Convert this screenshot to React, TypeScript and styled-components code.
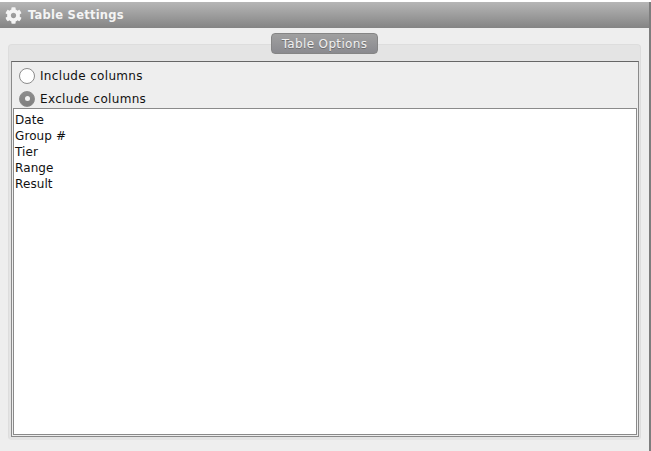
import * as React from "react";
import styled, { createGlobalStyle } from "styled-components";
import { FaCog } from "react-icons/fa";

const GlobalStyle = createGlobalStyle`
    html, body {
        margin: 0;
        padding: 0;
        background: #fff;
    }
    body {
        font-family: "DejaVu Sans", sans-serif;
    }
`;

const Frame = styled.div`
    width: 651px;
    height: 451px;
    padding-top: 2px;
    box-sizing: border-box;
    overflow: hidden;
`;

const Window = styled.div`
    width: 651px;
    height: 449px;
    box-sizing: border-box;
    border-right: 2px solid #7d7d7d;
    background: #eeeeee;
    display: flex;
    flex-direction: column;
`;

const TitleBar = styled.div`
    height: 26px;
    flex: none;
    display: flex;
    align-items: center;
    gap: 6px;
    padding-left: 5px;
    background: linear-gradient(#b6b6b6, #848484);
`;

const TitleText = styled.span`
    color: #f4f4f4;
    font-size: 11.5px;
    font-weight: bold;
    letter-spacing: 0.25px;
`;

const Body = styled.div`
    flex: 1;
    padding: 16px 8px 11px 8px;
    display: flex;
    min-height: 0;
`;

const Group = styled.div`
    position: relative;
    flex: 1;
    background: #e4e4e4;
    border: 1px solid #dddddd;
    border-bottom-color: #e4e4e4;
    border-radius: 4px;
    padding: 16px 1px 2px 2px;
    display: flex;
`;

const GroupTab = styled.div`
    position: absolute;
    top: -12px;
    left: 262px;
    width: 107px;
    height: 21px;
    box-sizing: border-box;
    border-radius: 4px;
    border: 1px solid #858585;
    background: linear-gradient(#a0a0a0, #8a8a8f);
    color: #f0f0f0;
    font-size: 12px;
    letter-spacing: 0.35px;
    text-shadow: 0 1px 0 #6e6e6e;
    display: flex;
    align-items: center;
    justify-content: center;
`;

const Options = styled.div`
    flex: 1;
    box-sizing: border-box;
    background: #eeeeee;
    border: 1px solid #8a8a8a;
    border-top-color: #666666;
    display: flex;
    flex-direction: column;
    padding: 0 1px 1px 1px;
`;

const RadioRow = styled.label<{ $height: number }>`
    display: flex;
    align-items: center;
    gap: 5px;
    height: ${(p) => p.$height}px;
    flex: none;
    padding-left: 6px;
    font-size: 12px;
    letter-spacing: 0.33px;
    color: #111;
`;

const RadioDot = styled.span<{ $checked?: boolean }>`
    width: 16px;
    height: 16px;
    border-radius: 50%;
    box-sizing: border-box;
    flex: none;
    display: flex;
    align-items: center;
    justify-content: center;
    border: 1px solid #8c8c8c;
    background: ${(p) => (p.$checked ? "linear-gradient(#8c8c8c, #808080)" : "#fff")};
    &::after {
        content: "";
        display: ${(p) => (p.$checked ? "block" : "none")};
        width: 5px;
        height: 5px;
        border-radius: 50%;
        background: #f2f2f2;
    }
`;

const ColumnList = styled.div`
    flex: 1;
    background: #fff;
    border: 1px solid #8a8a8a;
    padding: 3px 1px;
`;

const ColumnItem = styled.div`
    height: 16px;
    line-height: 16px;
    font-size: 12px;
    letter-spacing: 0.1px;
    color: #111;
`;

const columns = ["Date", "Group #", "Tier", "Range", "Result"];

export default function App() {
    return (
        <Frame>
            <GlobalStyle />
            <Window>
                <TitleBar>
                    <FaCog size={17} color="#f4f4f4" />
                    <TitleText>Table Settings</TitleText>
                </TitleBar>
                <Body>
                    <Group>
                        <GroupTab>Table Options</GroupTab>
                        <Options>
                            <RadioRow $height={27}>
                                <RadioDot />
                                Include columns
                            </RadioRow>
                            <RadioRow $height={19}>
                                <RadioDot $checked />
                                Exclude columns
                            </RadioRow>
                            <ColumnList>
                                {columns.map((c) => (
                                    <ColumnItem key={c}>{c}</ColumnItem>
                                ))}
                            </ColumnList>
                        </Options>
                    </Group>
                </Body>
            </Window>
        </Frame>
    );
}
